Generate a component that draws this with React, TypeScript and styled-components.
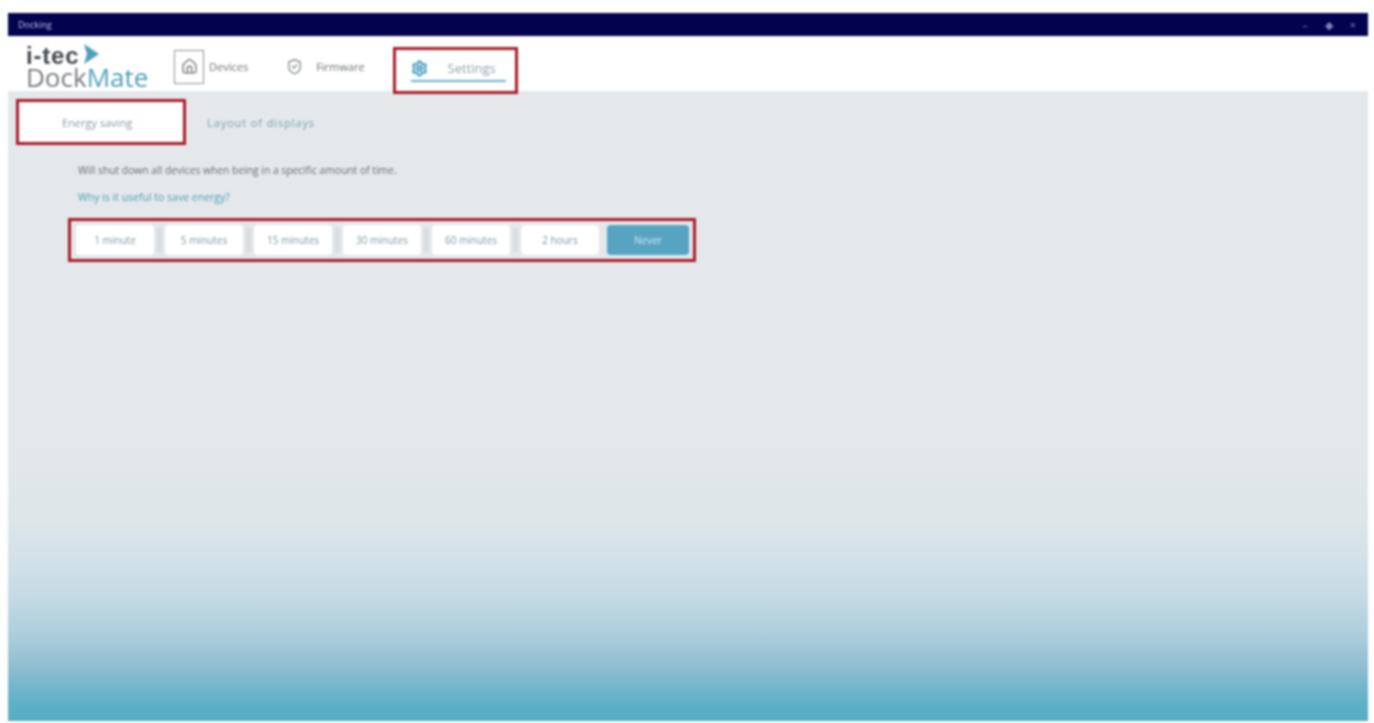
import { Fragment } from "react"
import styled, { createGlobalStyle } from "styled-components"
import { Home, Settings, ShieldCheck } from "lucide-react"

const DURATIONS = [
  "1 minute",
  "5 minutes",
  "15 minutes",
  "30 minutes",
  "60 minutes",
  "2 hours",
]

const GlobalStyle = createGlobalStyle`
  html, body {
    margin: 0;
    height: 100%;
    background: white;
    overflow: hidden;
  }
  body {
    font-family: "Open Sans", "Liberation Sans", sans-serif;
  }
`

const Page = styled.div`
  box-sizing: border-box;
  height: 723px;
  padding: 13px 6px 2px 8px;
  filter: blur(1.2px);
`

const Window = styled.div`
  height: 100%;
  display: flex;
  flex-direction: column;
`

const TitleBar = styled.div`
  height: 23px;
  flex: none;
  background: #02024f;
  color: #c3c9e6;
  display: flex;
  align-items: center;
  justify-content: space-between;
  padding: 0 12px 0 10px;
  font-size: 9px;
`

const WindowControls = styled.div`
  display: flex;
  align-items: center;
  gap: 17px;
  color: #7d82b4;
  font-size: 11px;
`

const Header = styled.header`
  box-sizing: border-box;
  position: relative;
  z-index: 1;
  height: 55px;
  flex: none;
  background: white;
  display: flex;
  align-items: center;
  padding: 6px 0 0 18px;
`

const Logo = styled.div`
  position: relative;
  width: 124px;
  height: 46px;
  margin-right: 24px;
  line-height: 1;
`

const LogoBrand = styled.div`
  font-family: "Liberation Sans", sans-serif;
  font-size: 24px;
  font-weight: 700;
  letter-spacing: 0.8px;
  color: #44494d;
  height: 20px;
`

const LogoName = styled.div`
  font-family: "Open Sans", sans-serif;
  font-size: 26px;
  color: #777c80;

  span {
    color: #4f9fbb;
  }
`

const LogoArrow = styled.svg`
  position: absolute;
  left: 56px;
  top: -1px;
`

const HomeIconBox = styled.div`
  width: 30px;
  height: 34px;
  border: 1.5px solid #8f8f8f;
  box-sizing: border-box;
  display: flex;
  align-items: center;
  justify-content: center;
  color: #777;
`

const NavItem = styled.div`
  display: flex;
  align-items: center;
  font-size: 11px;
  color: #6b7276;
`

const NavLabel = styled.span<{ $gap: number; $end: number }>`
  margin-left: ${({ $gap }) => $gap}px;
  margin-right: ${({ $end }) => $end}px;
`

const SettingsItem = styled.div`
  box-sizing: border-box;
  width: 125px;
  height: 47px;
  margin-top: 8px;
  padding-left: 15px;
  border: 3px solid #a81c28;
  display: flex;
  flex-direction: column;
  align-items: flex-start;
  justify-content: center;
`

const SettingsRow = styled.div`
  display: flex;
  align-items: center;
  gap: 20px;
  color: #4aa1bd;
  font-size: 13px;

  span {
    color: #8aa6b0;
  }
`

const SettingsUnderline = styled.div`
  width: 95px;
  height: 2px;
  margin-top: 3px;
  background: #6fb0c4;
`

const Content = styled.main`
  flex: 1;
  background: linear-gradient(
    to bottom,
    #e4e8eb 0%,
    #e4e8eb 55%,
    #dde6e8 68%,
    #d3e2e9 74%,
    #c2d9e3 81%,
    #a9ccda 87%,
    #8cbccf 92%,
    #6fb6cb 95%,
    #5aaec6 98%,
    #58acc4 100%
  );
  padding: 8px 0 0 8px;
`

const SubTabs = styled.div`
  display: flex;
  align-items: center;
`

const SubTabActive = styled.div`
  box-sizing: border-box;
  width: 170px;
  height: 46px;
  border: 3px solid #a81c28;
  background: white;
  display: flex;
  align-items: center;
  justify-content: center;
  font-size: 11px;
  color: #8a9aa0;
  padding-right: 8px;
`

const SubTab = styled.div`
  margin-left: 21px;
  font-size: 11px;
  letter-spacing: 0.9px;
  color: #7a9dab;
`

const Section = styled.section`
  padding: 18px 0 0 62px;
`

const Description = styled.p`
  margin: 0;
  font-size: 10.3px;
  line-height: 14px;
  color: #676c70;
`

const MoreLink = styled.a`
  display: block;
  margin-top: 13px;
  font-size: 10.5px;
  line-height: 14px;
  color: #4b9fb5;
`

const DurationGroup = styled.div`
  box-sizing: border-box;
  width: 628px;
  height: 44px;
  margin: 14px 0 0 -10px;
  border: 3px solid #a81c28;
  display: flex;
  align-items: center;
  padding-left: 5px;
`

const DurationButton = styled.button<{ $selected?: boolean }>`
  width: ${({ $selected }) => ($selected ? 82 : 78)}px;
  height: 30px;
  flex: none;
  border: none;
  border-radius: 4px;
  padding: 0;
  margin-left: ${({ $selected }) => ($selected ? 8 : 0)}px;
  background: ${({ $selected }) => ($selected ? "#56a4c1" : "white")};
  color: ${({ $selected }) => ($selected ? "#d3e8f0" : "#7f97a4")};
  font-family: inherit;
  font-size: 10px;
`

const DurationDivider = styled.div`
  width: 5px;
  height: 24px;
  flex: none;
  margin: 0 3px;
  background: #d9dde0;
`

export default function App() {
  return (
    <Page>
      <GlobalStyle />
      <Window>
        <TitleBar>
          <span>Docking</span>
          <WindowControls>
            <span>–</span>
            <span>◆</span>
            <span>×</span>
          </WindowControls>
        </TitleBar>

        <Header>
          <Logo>
            <LogoBrand>i-tec</LogoBrand>
            <LogoName>
              Dock<span>Mate</span>
            </LogoName>
            <LogoArrow width="18" height="22" viewBox="0 0 18 22">
              <path d="M2 1 L17 11 L2 21 L5 11 Z" fill="#4f9fbb" />
            </LogoArrow>
          </Logo>
          <HomeIconBox>
            <Home size={17} />
          </HomeIconBox>
          <NavItem>
            <NavLabel $gap={5} $end={38}>
              Devices
            </NavLabel>
          </NavItem>
          <NavItem>
            <ShieldCheck size={17} color="#8a8f93" />
            <NavLabel $gap={13} $end={28}>
              Firmware
            </NavLabel>
          </NavItem>
          <SettingsItem>
            <SettingsRow>
              <Settings size={17} strokeWidth={3} />
              <span>Settings</span>
            </SettingsRow>
            <SettingsUnderline />
          </SettingsItem>
        </Header>

        <Content>
          <SubTabs>
            <SubTabActive>Energy saving</SubTabActive>
            <SubTab>Layout of displays</SubTab>
          </SubTabs>

          <Section>
            <Description>
              Will shut down all devices when being in a specific amount of time.
            </Description>
            <MoreLink>Why is it useful to save energy?</MoreLink>
            <DurationGroup>
              {DURATIONS.map((label, index) => (
                <Fragment key={label}>
                  <DurationButton>{label}</DurationButton>
                  {index < DURATIONS.length - 1 && <DurationDivider />}
                </Fragment>
              ))}
              <DurationButton $selected>Never</DurationButton>
            </DurationGroup>
          </Section>
        </Content>
      </Window>
    </Page>
  )
}
